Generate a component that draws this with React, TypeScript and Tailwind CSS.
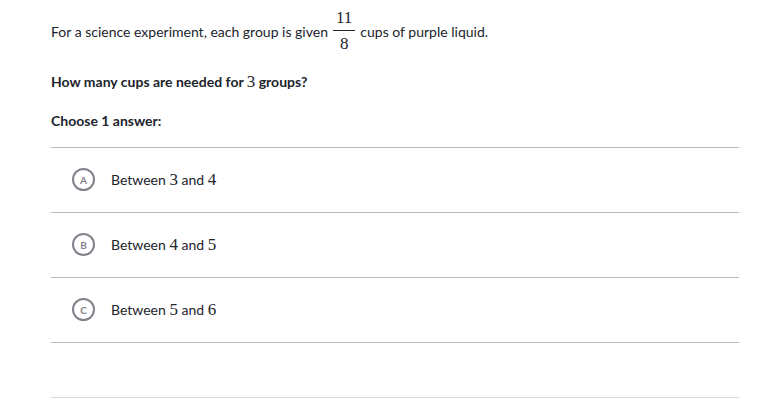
import React from 'react';

const choices = [
  { letter: 'A', lo: '3', hi: '4' },
  { letter: 'B', lo: '4', hi: '5' },
  { letter: 'C', lo: '5', hi: '6' },
];

const M = ({ children }: { children: React.ReactNode }) => (
  <span className="font-['Liberation_Serif',serif] text-[17px] font-normal">{children}</span>
);

export default function App() {
  return (
    <div className="min-h-[413px] w-[769px] bg-white font-['Lato',sans-serif] text-[14px] text-[#21242c]">
      <div className="pl-[51px] pr-[30px]">
        <div className="flex h-[62px] items-center">
          <span>For a science experiment, each group is given</span>
          <span className="mx-[5px] inline-flex flex-col items-center font-['Liberation_Serif',serif] text-[17px] leading-[18px]">
            <span className="px-[3px] pb-[3px]">11</span>
            <span className="h-px w-full bg-[#21242c]" />
            <span className="px-[3px] pt-[4px]">8</span>
          </span>
          <span>cups of purple liquid.</span>
        </div>
        <div className="mt-[7px] font-bold">
          How many cups are needed for <M>3</M> groups?
        </div>
        <div className="mt-[15px] font-bold">Choose 1 answer:</div>
        <div className="mt-[16px] w-[688px]">
          {choices.map((c) => (
            <div key={c.letter} className="flex h-[65px] items-center border-t border-[#bababe] pl-[21px]">
              <div className="flex size-[23px] shrink-0 items-center justify-center rounded-full border-2 border-[#7f8389] text-[10px] font-bold leading-none text-[#7f8389]">
                {c.letter}
              </div>
              <span className="ml-[16px]">
                Between <M>{c.lo}</M> and <M>{c.hi}</M>
              </span>
            </div>
          ))}
          <div className="h-[55px] border-t border-[#bababe]" />
          <div className="border-t border-[#d6d8da]" />
        </div>
      </div>
    </div>
  );
}
